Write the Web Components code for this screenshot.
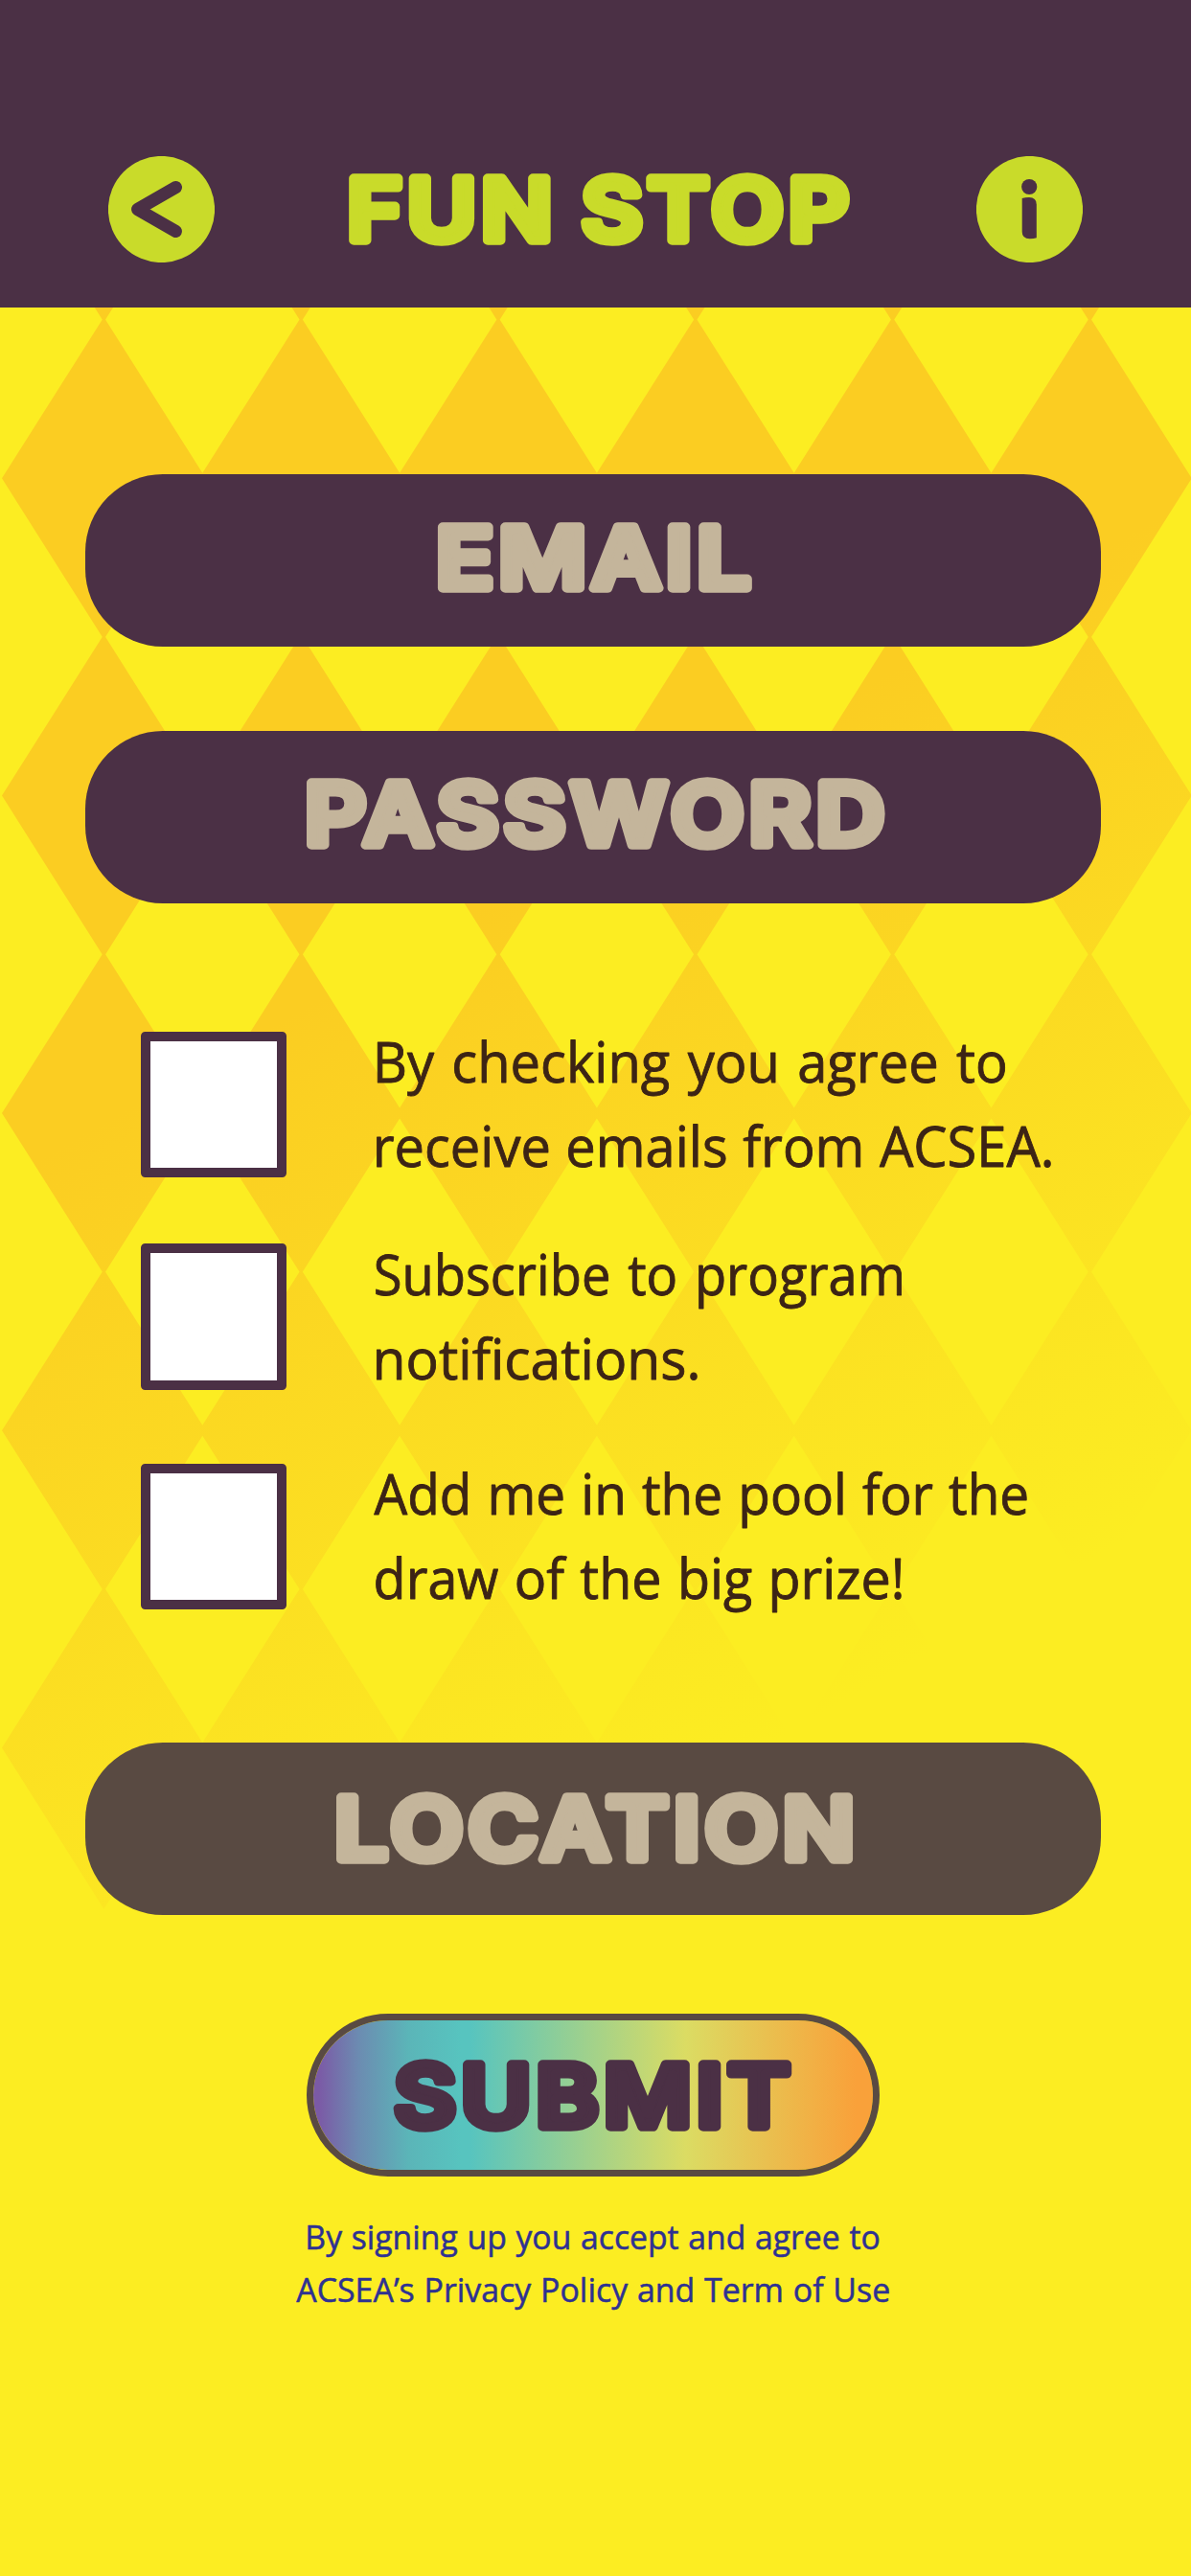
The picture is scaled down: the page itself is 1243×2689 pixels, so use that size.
<!DOCTYPE html>
<html lang="en">
<head>
<meta charset="utf-8">
<title>Fun Stop</title>
<style>
  html, body { margin: 0; background: #fced22; }
</style>
</head>
<body>
<fun-screen>
  <fun-header slot="header"></fun-header>
  <pill-field>
    <fit-text label="EMAIL" width="328" cap="74" bold></fit-text>
  </pill-field>
  <pill-field style="--gap:88.3px">
    <fit-text label="PASSWORD" width="604" cap="75" bold style="margin-left:2px"></fit-text>
  </pill-field>
  <check-row style="--gap:133.7px;--up:9.3px">
    <fit-text label="By checking you agree to" width="656.5" cap="44" word="4"></fit-text>
    <fit-text label="receive emails from ACSEA." width="704.5" cap="44" word="1"></fit-text>
  </check-row>
  <check-row style="--gap:69.3px;--up:9.5px">
    <fit-text label="Subscribe to program" width="549" cap="44" word="4" style="margin-left:-1px"></fit-text>
    <fit-text label="notifications." width="335.5" cap="44"></fit-text>
  </check-row>
  <check-row style="--gap:77.3px;--up:8.8px">
    <fit-text label="Add me in the pool for the" width="682.5" cap="44" word="2" style="margin-left:-3px"></fit-text>
    <fit-text label="draw of the big prize!" width="549.5" cap="44" word="2" style="margin-left:-1px"></fit-text>
  </check-row>
  <pill-field style="--gap:138.8px;--fill:#594a42;--low:4px">
    <fit-text label="LOCATION" width="539" cap="75" bold></fit-text>
  </pill-field>
  <submit-button>
    <fit-text label="SUBMIT" width="415.3" cap="75" bold></fit-text>
  </submit-button>
  <legal-note>
    <fit-text label="By signing up you accept and agree to" width="597.2" cap="26" word="1" style="margin-left:2px"></fit-text>
    <fit-text label="ACSEA’s Privacy Policy and Term of Use" width="619" cap="26" word="1" style="margin-left:-1px"></fit-text>
  </legal-note>
</fun-screen>

<script>
const ctx = document.createElement('canvas').getContext('2d');

class Base extends HTMLElement {
  constructor() {
    super();
    this.attachShadow({ mode: 'open' }).innerHTML = this.constructor.markup;
  }
}

/* One line of text whose drawn width and cap height are set by attributes. */
class FitText extends Base {
  static markup = `<style>
    :host { display: block; flex: none; }
    svg { display: block; overflow: visible; }
    text { fill: currentColor; stroke: currentColor; stroke-linejoin: round; white-space: pre; }
  </style><svg><text></text></svg>`;
  connectedCallback() {
    const bold = this.hasAttribute('bold');
    const width = +this.getAttribute('width');
    const cap = +this.getAttribute('cap');
    const word = +(this.getAttribute('word') || 0);
    const letter = bold ? 4.5 : 0;
    const stroke = bold ? 9.5 : cap * 0.02;
    const family = bold ? 'Inter, "Liberation Sans", sans-serif' : '"Open Sans", "Noto Sans", sans-serif';
    const weight = bold ? 600 : 400;
    ctx.font = `${weight} 100px ${family}`;
    ctx.wordSpacing = '0px';
    ctx.letterSpacing = '0px';
    const size = 100 * (cap - stroke) / ctx.measureText('H').actualBoundingBoxAscent;
    ctx.font = `${weight} ${size}px ${family}`;
    ctx.wordSpacing = word + 'px';
    ctx.letterSpacing = letter + 'px';
    const label = this.getAttribute('label');
    const m = ctx.measureText(label);
    const ink = m.actualBoundingBoxRight + m.actualBoundingBoxLeft;
    const sx = (width - stroke) / ink;
    const svg = this.shadowRoot.querySelector('svg');
    svg.setAttribute('width', width);
    svg.setAttribute('height', cap);
    const t = svg.firstElementChild;
    t.textContent = label;
    t.setAttribute('style', `font:${weight} ${size}px ${family};word-spacing:${word}px;letter-spacing:${letter}px;stroke-width:${stroke}px`);
    t.setAttribute('transform',
      `translate(${stroke / 2 + m.actualBoundingBoxLeft * sx} ${cap - stroke / 2}) scale(${sx} 1)`);
  }
}

class HarlequinPattern extends Base {
  static markup = `<style>:host{display:block} svg{display:block;width:100%;height:100%}</style>
  <svg viewBox="0 0 1243 2689">
    <defs><linearGradient id="fade" gradientUnits="userSpaceOnUse" x1="535" y1="927" x2="987" y2="1715">
      <stop offset="0" stop-color="#fbcd22"/><stop offset="1" stop-color="#fced22"/>
    </linearGradient></defs>
    <path fill="url(#fade)"/>
  </svg>`;
  connectedCallback() {
    let d = '';
    for (let r = 0; r < 6; r++) for (let c = 0; c < 6; c++) {
      const x = 108.4 + c * 205.8, y = 168 + r * 331.3;
      d += `M${x - 106.4} ${y}L${x} ${y - 168.3}L${x + 106.4} ${y}L${x} ${y + 168.3}Z`;
    }
    this.shadowRoot.querySelector('path').setAttribute('d', d);
  }
}

class FunScreen extends Base {
  static markup = `<style>
    :host { display: grid; width: 1243px; height: 2689px; overflow: hidden; background: #fced22; }
    harlequin-pattern, .page { grid-area: 1 / 1; min-height: 0; }
    .page { display: flex; flex-direction: column; z-index: 1; }
    main { display: flex; flex-direction: column; align-items: flex-start; padding: 173.4px 0 0 89.4px; }
  </style>
  <harlequin-pattern></harlequin-pattern>
  <div class="page"><slot name="header"></slot><main><slot></slot></main></div>`;
}

class FunHeader extends Base {
  static markup = `<style>
    :host { display: flex; justify-content: space-between; align-items: flex-start; box-sizing: border-box;
      height: 321.3px; padding: 163px 113px 0; background: #4b3045; color: #c9db2a; flex: none; }
    svg { display: block; flex: none; }
    fit-text { margin: 18.3px 0 0 8px; }
  </style>
  <svg width="111" height="111" viewBox="0 0 111 111"><circle cx="55.5" cy="55.5" r="55.6" fill="#c9db2a"/>
    <path d="M70.5 32.5 30.5 55.5 70.5 78.5" fill="none" stroke="#4b3045" stroke-width="13" stroke-linecap="round" stroke-linejoin="round"/></svg>
  <fit-text label="FUN STOP" width="523" cap="74.5" word="-4" bold></fit-text>
  <svg width="111" height="111" viewBox="0 0 111 111"><circle cx="55.5" cy="55.5" r="55.6" fill="#c9db2a"/>
    <ellipse cx="55.2" cy="32" rx="8.1" ry="8" fill="#4b3045"/>
    <path d="M47.7 44.1Q51 43 55 43Q62.8 43 62.8 50.5V85.3Q60 86.2 55.6 86.2Q47.7 86.2 47.7 79Z" fill="#4b3045"/></svg>`;
}

class PillField extends Base {
  static markup = `<style>
    :host { display: flex; justify-content: center; align-items: center; box-sizing: border-box; flex: none;
      width: 1060px; height: 180px; margin-top: var(--gap, 0px); padding: var(--low, 0px) 0 6px 3px;
      border-radius: 81px; background: var(--fill, #4b3045); color: #c4b59b; }
  </style><slot></slot>`;
}

class CheckRow extends Base {
  static markup = `<style>
    :host { display: flex; align-items: flex-start; margin: var(--gap) 0 0 57.4px; flex: none; color: #3c2415; }
    .box { box-sizing: border-box; width: 152.4px; height: 152.4px; border: 10px solid #4b3045;
      border-radius: 4.5px; background: #fff; flex: none; }
    .lines { display: flex; flex-direction: column; gap: 44.2px; height: 140px; margin: var(--up) 0 0 93.8px; }
  </style><div class="box" role="checkbox" aria-checked="false"></div><div class="lines"><slot></slot></div>`;
}

class SubmitButton extends Base {
  static markup = `<style>
    :host { display: flex; justify-content: center; align-items: center; box-sizing: border-box; flex: none;
      width: 597.5px; height: 170.4px; margin: 102.6px 0 0 231px; border: 7px solid #594a42;
      border-radius: 85.2px; color: #4b3045;
      background: linear-gradient(90deg, #7b5aa6 1%, #6c8bb1 8%, #5bb5b8 17%, #57c4bf 26.5%, #57c4bf 28%, #84cc9f 41%, #dbdc63 66.5%, #f9a13a 97%) padding-box; }
    ::slotted(fit-text) { margin: 1px 0 0 0; }
  </style><slot></slot>`;
}

class LegalNote extends Base {
  static markup = `<style>
    :host { display: flex; flex-direction: column; align-items: center; gap: 29px; width: 618px;
      margin: 49.6px 0 0 220.7px; flex: none; color: #2e3192; }
  </style><slot></slot>`;
}

customElements.define('fit-text', FitText);
customElements.define('harlequin-pattern', HarlequinPattern);
customElements.define('fun-header', FunHeader);
customElements.define('pill-field', PillField);
customElements.define('check-row', CheckRow);
customElements.define('submit-button', SubmitButton);
customElements.define('legal-note', LegalNote);
customElements.define('fun-screen', FunScreen);
</script>
</body>
</html>
